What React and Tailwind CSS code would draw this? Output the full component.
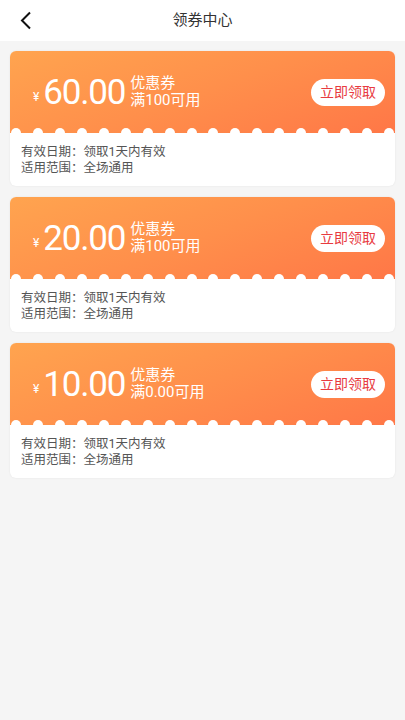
import React from "react";

const coupons = [
  { amount: "60.00", cond: "满100可用" },
  { amount: "20.00", cond: "满100可用" },
  { amount: "10.00", cond: "满0.00可用" },
];

function Coupon({ amount, cond }) {
  const dots = Array.from({ length: 18 });
  return (
    <div className="mx-[10px] rounded-[6px] bg-white shadow-[0_0_2px_rgba(0,0,0,0.08)] overflow-hidden">
      <div className="relative h-[82px] bg-[linear-gradient(160deg,#ffa44f_0%,#ff8f4b_50%,#ff7747_100%)] flex items-center pl-[23px] pr-[10px]">
        <span className="text-white text-[12px] leading-none self-end mb-[30px] mr-[4px]">¥</span>
        <span className="text-white text-[35px] leading-none tracking-[-1.2px] font-['Roboto']">{amount}</span>
        <div className="ml-[5px] flex flex-col text-white text-[15px] leading-[17px]">
          <span>优惠券</span>
          <span>{cond}</span>
        </div>
        <div className="ml-auto h-[27px] w-[74px] rounded-full bg-white flex items-center justify-center text-[#e83b3f] text-[14px]">
          立即领取
        </div>
        <div className="absolute left-0 right-0 bottom-[-5px] flex justify-between px-[1px]">
          {dots.map((_, i) => (
            <div key={i} className="w-[10px] h-[10px] rounded-full bg-white" />
          ))}
        </div>
      </div>
      <div className="h-[53px] pt-[11px] pl-[11px] text-[12.5px] leading-[16px] text-[#555]">
        <div>有效日期：领取1天内有效</div>
        <div>适用范围：全场通用</div>
      </div>
    </div>
  );
}

export default function App() {
  return (
    <div className="w-[405px] h-[720px] bg-[#f5f5f5] font-['Roboto','Noto_Sans_CJK_SC',sans-serif]">
      <div className="h-[41px] bg-white relative flex items-center justify-center">
        <svg className="absolute left-[18px] top-[11px]" width="16" height="19" viewBox="0 0 16 19">
          <path d="M12 1.5 L4 9.5 L12 17.5" fill="none" stroke="#111" strokeWidth="2" />
        </svg>
        <span className="text-[15px] text-[#333]">领券中心</span>
      </div>
      <div className="pt-[10px] flex flex-col gap-[11px]">
        {coupons.map((c, i) => (
          <Coupon key={i} {...c} />
        ))}
      </div>
    </div>
  );
}
